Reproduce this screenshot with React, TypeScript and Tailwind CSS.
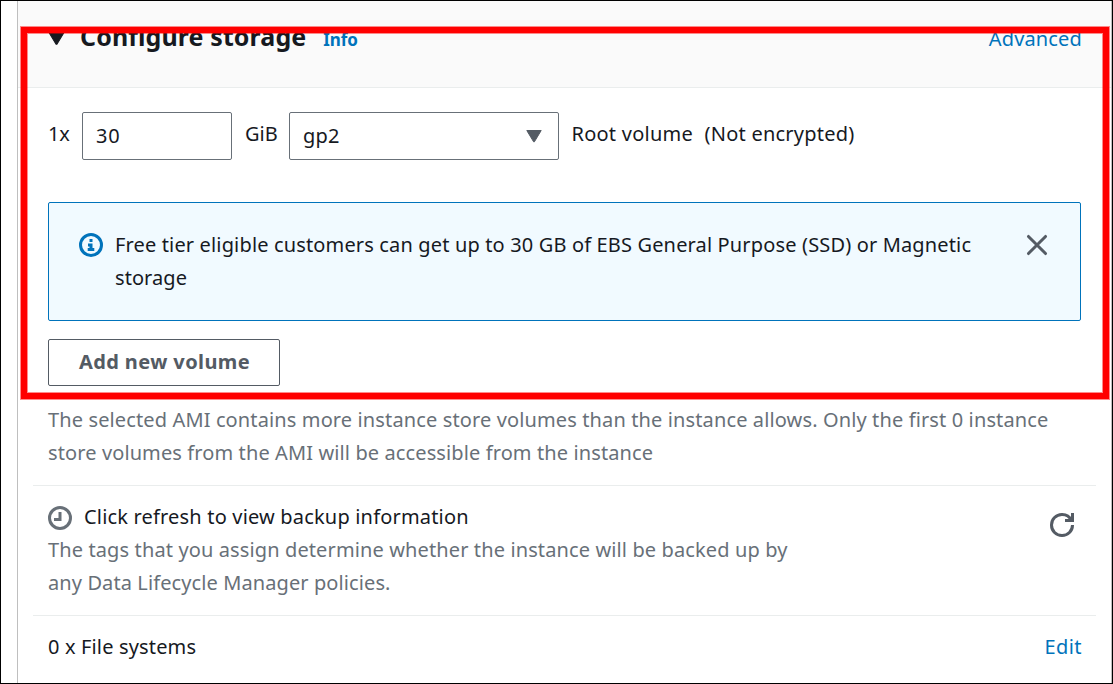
import type { ReactNode } from "react";

function Triangle({ className }: { className: string }) {
  return (
    <svg viewBox="0 0 16 14" className={className} fill="currentColor" stroke="currentColor" strokeLinejoin="round">
      <path d="M0.8 1.5h14.4L8.4 12.8h-.8z" />
    </svg>
  );
}

function InfoIcon() {
  return (
    <svg viewBox="0 0 16 16" className="mt-[5px] size-6 shrink-0 text-[#0073bb]" fill="none" stroke="currentColor" strokeWidth="2">
      <circle cx="8" cy="8" r="7" />
      <path d="M8 11V8H6" />
      <path d="M10.2 11H5.8M8 6V4" />
    </svg>
  );
}

function CloseIcon() {
  return (
    <svg viewBox="0 0 16 16" className="size-6" fill="none" stroke="currentColor" strokeWidth="2" strokeLinecap="round">
      <path d="M2.3 2.3l11.4 11.4M13.7 2.3L2.3 13.7" />
    </svg>
  );
}

function ClockIcon() {
  return (
    <svg viewBox="0 0 16 16" className="mt-[6px] size-6 shrink-0 text-[#687078]" fill="none" stroke="currentColor" strokeWidth="2">
      <circle cx="8" cy="8" r="7" />
      <path d="M8 4v5H4" />
    </svg>
  );
}

function RefreshIcon() {
  return (
    <svg viewBox="0 0 16 16" className="size-6" fill="none" stroke="currentColor" strokeWidth="2">
      <path d="M10 5h5V0" />
      <path d="M15 8a6.96 6.96 0 0 1-7 7 6.96 6.96 0 0 1-7-7 6.96 6.96 0 0 1 7-7 6.87 6.87 0 0 1 6.3 4" />
    </svg>
  );
}

function Link({ children }: { children: ReactNode }) {
  return <a className="text-[#0073bb]">{children}</a>;
}

export default function App() {
  return (
    <div className="relative flex h-[684px] w-[1113px] overflow-hidden border border-black bg-white pl-4 font-['Noto_Sans','Open_Sans',sans-serif] text-[20px] leading-[33px] tracking-[0.15px] text-[#16191f]">
      <section className="flex flex-1 flex-col border-x border-[#bfbfbf]">
        <header className="flex h-[87px] shrink-0 items-start justify-between border-b border-[#eaeded] bg-[#fafafa] pr-[29px] pl-[30px]">
          <div className="flex items-baseline pt-[19px]">
            <Triangle className="h-4 w-[17px]" />
            <h2 className="ml-[15px] text-[25px] font-bold tracking-[0.1px]">Configure storage</h2>
            <a className="ml-[17px] text-[17px] font-bold tracking-[-0.1px] text-[#0073bb]">Info</a>
          </div>
          <div className="pt-[21px]">
            <Link>Advanced</Link>
          </div>
        </header>

        <div className="flex h-[114px] shrink-0 items-start pt-6 pl-[30px]">
          <span className="mt-[5px] w-[34px] tracking-[-0.1px]">1x</span>
          <div className="flex h-12 w-[150px] items-center rounded-[2px] border border-[#687078] pb-0.5 pl-[13px] tracking-[0.8px]">30</div>
          <span className="mt-[5px] ml-[13px] w-11 tracking-[0px]">GiB</span>
          <div className="flex h-12 w-[270px] items-center justify-between rounded-[2px] border border-[#687078] pr-4 pl-[13px]">
            <span className="pb-0.5">gp2</span>
            <Triangle className="h-[14px] w-4 text-[#545b64]" />
          </div>
          <span className="mt-[5px] ml-[12.5px] tracking-[0.24px]">Root volume</span>
          <span className="mt-[5px] ml-[11.5px] tracking-[0.24px]">(Not encrypted)</span>
        </div>

        <div className="mr-[30px] ml-[30px] flex h-[119px] shrink-0 rounded-[2px] border border-[#0073bb] bg-[#f1faff] pt-[25px] pl-[30px]">
          <InfoIcon />
          <p className="ml-3 w-[880px]">
            Free tier eligible customers can get up to 30 GB of EBS General Purpose (SSD) or Magnetic
            <br />
            <span className="tracking-[0.06px]">storage</span>
          </p>
          <button className="mt-[5px] ml-[30px] h-6 text-[#545b64]">
            <CloseIcon />
          </button>
        </div>

        <button className="mt-[18px] ml-[30px] h-[47px] w-[232px] shrink-0 rounded-[2px] border border-[#545b64] pb-[3px] pl-px font-bold tracking-[0.4px] text-[#545b64]">
          Add new volume
        </button>

        <p className="mt-[17px] ml-[30px] whitespace-nowrap text-[#687078] tracking-[0.125px]">
          The selected AMI contains more instance store volumes than the instance allows. Only the first 0 instance
          <br />
          <span className="tracking-[0.11px]">store volumes from the AMI will be accessible from the instance</span>
        </p>

        <div className="mx-[15px] mt-4 flex h-[130px] shrink-0 justify-between border-t border-[#eaeded] pt-[14px] pr-[22px] pl-[15px]">
          <div>
            <div className="flex">
              <ClockIcon />
              <span className="ml-3 tracking-[0.18px]">Click refresh to view backup information</span>
            </div>
            <p className="tracking-[0.12px] text-[#687078]">
              The tags that you assign determine whether the instance will be backed up by
              <br />
              <span className="tracking-[0.1px]">any Data Lifecycle Manager policies.</span>
            </p>
          </div>
          <button className="mt-[13px] h-6 text-[#545b64]">
            <RefreshIcon />
          </button>
        </div>

        <div className="mx-[15px] flex flex-1 justify-between border-t border-[#eaeded] pr-[14px] pl-[15px] pt-[14px]">
          <span>0 x File systems</span>
          <span className="tracking-[0.4px]">
            <Link>Edit</Link>
          </span>
        </div>
      </section>

      <div className="pointer-events-none absolute top-[26px] left-5 h-[372px] w-[1088px] border-[6px] border-[#ff0000] shadow-[0_0_0_1px_rgba(255,0,0,0.45),inset_0_0_0_1px_rgba(255,0,0,0.45)]" />
    </div>
  );
}
